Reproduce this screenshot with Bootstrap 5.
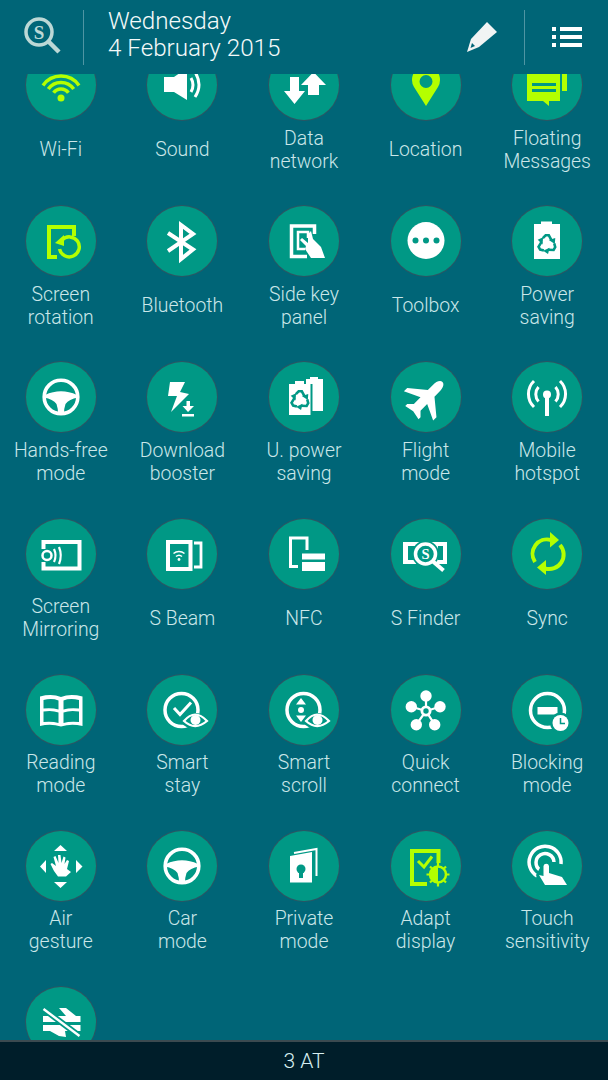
<!DOCTYPE html>
<html lang="en">
<head>
    <meta charset="UTF-8">
    <title>Quick settings</title>
    <meta name="viewport" content="width=device-width, initial-scale=1">
    <link href="https://cdn.jsdelivr.net/npm/bootstrap@5.3.3/dist/css/bootstrap.min.css" rel="stylesheet">
    <script src="https://cdn.jsdelivr.net/npm/bootstrap@5.3.3/dist/js/bootstrap.bundle.min.js"></script>
    <style>
        body {
            background-color: #006577;
            font-family: Roboto, "Liberation Sans", sans-serif;
            color: #cbe7e9;
            height: 1080px;
        }

        .top-bar {
            height: 74px;
            flex: none;
        }

        .top-sep {
            width: 1px;
            height: 55px;
            background: #4f95a3;
            flex: none;
        }

        .search-btn {
            width: 83px;
            padding-left: 23px;
        }

        .date-text {
            margin-left: 24px;
            margin-bottom: 5px;
            font-size: 24.2px;
            font-weight: 300;
            line-height: 27px;
            color: #f4fafa;
        }

        .edit-btn {
            margin-right: 26px;
        }

        .list-btn {
            margin-left: 27px;
            margin-right: 26px;
        }

        .tile-area {
            min-height: 0;
        }

        .tile-grid {
            margin-top: -24px;
        }

        .tile {
            height: 156.2px;
        }

        .tile-disc {
            width: 70px;
            height: 70px;
            background: #009885;
            box-shadow: 0 0 0 1px #2c5663;
        }

        .tile-label {
            height: 46px;
            margin-top: 6.5px;
            font-size: 19.4px;
            font-weight: 300;
            line-height: 23px;
        }

        .ico {
            display: block;
            fill: #fff;
            color: #fff;
        }

        .ico.lime {
            fill: #b4ff00;
            color: #b4ff00;
        }

        .ln {
            fill: none;
            stroke: currentColor;
        }

        .hole {
            fill: #009885;
        }

        .hole-ln {
            fill: none;
            stroke: #009885;
        }

        .sign {
            font-family: "Liberation Serif", serif;
            font-weight: 700;
        }

        .bottom-bar {
            height: 40px;
            flex: none;
            padding-top: 2px;
            background: #001e2a;
            border-top: 2px solid #3b4a50;
            font-size: 21px;
            font-weight: 300;
            color: #d6eef0;
        }
    </style>
</head>
<body class="d-flex flex-column overflow-hidden">

<!-- shared shapes -->
<svg class="d-none">
    <symbol id="wheel" viewBox="0 0 70 70">
        <circle class="ln" cx="35" cy="35" r="16.800" stroke-width="3.600"/>
        <path d="M19 33Q35 25.500 51 33L52 35.500Q43 37 39.500 42 38 46 38 52H32Q32 46 30.500 42 27 37 18 35.500Z"/>
    </symbol>
    <symbol id="recycle" viewBox="-12 -12 24 24">
        <g id="rec-arm">
            <path class="hole-ln" d="M-4.500-6.500-1.500-9.500H2L5-4" stroke-width="2.800"/>
            <path class="hole" d="M2-4.500 9-6.500 8.500 0Z"/>
        </g>
        <use href="#rec-arm" transform="rotate(120)"/>
        <use href="#rec-arm" transform="rotate(240)"/>
    </symbol>
</svg>

<header class="top-bar d-flex align-items-center">
    <div class="search-btn">
        <svg class="ico" width="40" height="40" viewBox="0 0 40 40">
            <circle cx="16" cy="15" r="13" fill="none" stroke="#bcd8d6" stroke-width="3.500"/>
            <text class="sign" x="16" y="21.500" font-size="19" text-anchor="middle" fill="#bcd8d6">S</text>
            <path d="M25.500 24.500 36 35" stroke="#bcd8d6" stroke-width="4.500" fill="none"/>
        </svg>
    </div>
    <div class="top-sep"></div>
    <div class="date-text flex-grow-1">Wednesday<br>4 February 2015</div>
    <svg class="ico edit-btn" width="32" height="32" viewBox="0 0 32 32">
        <path fill="#f1f4f4" d="M21 1 31 11 13 26 1 31 5 18Z"/>
        <path style="fill:#006577" d="M4.500 27 6 22 9 25Z"/>
    </svg>
    <div class="top-sep"></div>
    <svg class="ico list-btn" width="30" height="22" viewBox="0 0 30 22">
        <path d="M0 1H4V5H0ZM8 1H30V5H8ZM0 9H4V13H0ZM8 9H30V13H8ZM0 17H4V21H0ZM8 17H30V21H8Z"/>
    </svg>
</header>

<main class="tile-area flex-grow-1 overflow-hidden">
    <div class="row row-cols-5 g-0 tile-grid">

        <div class="col tile d-flex flex-column align-items-center">
            <div class="tile-disc rounded-circle">
                <svg class="ico lime" width="70" height="70" viewBox="0 0 70 70">
                    <g class="ln" stroke-width="3.500">
                        <path d="M27.600 42.800A9 9 0 0 1 42.400 42.800"/>
                        <path d="M22.300 39.100A15.500 15.500 0 0 1 47.700 39.100"/>
                        <path d="M17 35.400A22 22 0 0 1 53 35.400"/>
                    </g>
                    <circle cx="35" cy="48" r="3.500"/>
                </svg>
            </div>
            <div class="tile-label d-flex align-items-center text-center">Wi-Fi</div>
        </div>

        <div class="col tile d-flex flex-column align-items-center">
            <div class="tile-disc rounded-circle">
                <svg class="ico" width="70" height="70" viewBox="0 0 70 70">
                    <path d="M17 27H27L40 18V50L27 42H17Z"/>
                    <g class="ln" stroke-width="3">
                        <path d="M44 28Q48 35 44 42"/>
                        <path d="M48 22Q56 35 48 47"/>
                    </g>
                </svg>
            </div>
            <div class="tile-label d-flex align-items-center text-center">Sound</div>
        </div>

        <div class="col tile d-flex flex-column align-items-center">
            <div class="tile-disc rounded-circle">
                <svg class="ico" width="70" height="70" viewBox="0 0 70 70">
                    <path d="M21 27H30V41H36L25.500 54 15 41H21Z"/>
                    <path d="M44.500 22 57 35H50V45H39V35H32Z"/>
                </svg>
            </div>
            <div class="tile-label d-flex align-items-center text-center">Data<br>network</div>
        </div>

        <div class="col tile d-flex flex-column align-items-center">
            <div class="tile-disc rounded-circle">
                <svg class="ico lime" width="70" height="70" viewBox="0 0 70 70">
                    <path fill-rule="evenodd" d="M35 56 23 37A14 14 0 1 1 47 37ZM35 38A6.500 6.500 0 1 0 35 25 6.500 6.500 0 1 0 35 38Z"/>
                </svg>
            </div>
            <div class="tile-label d-flex align-items-center text-center">Location</div>
        </div>

        <div class="col tile d-flex flex-column align-items-center">
            <div class="tile-disc rounded-circle">
                <svg class="ico lime" width="70" height="70" viewBox="0 0 70 70">
                    <path d="M15 20H48V51H37V56L31 51H15Z"/>
                    <path d="M50 20H55V41H50Z"/>
                    <path class="hole" d="M20 33H44V36H20ZM20 39H44V42H20Z"/>
                </svg>
            </div>
            <div class="tile-label d-flex align-items-center text-center">Floating<br>Messages</div>
        </div>

        <div class="col tile d-flex flex-column align-items-center">
            <div class="tile-disc rounded-circle">
                <svg class="ico lime" width="70" height="70" viewBox="0 0 70 70">
                    <path d="M50 30V19H21V53H31V49H25V23H46V30Z"/>
                    <path class="ln" stroke-width="3.500" d="M36 34A10 10 0 1 1 33.500 43"/>
                    <path d="M29 37 38 29V40Z"/>
                </svg>
            </div>
            <div class="tile-label d-flex align-items-center text-center">Screen<br>rotation</div>
        </div>

        <div class="col tile d-flex flex-column align-items-center">
            <div class="tile-disc rounded-circle">
                <svg class="ico" width="70" height="70" viewBox="0 0 70 70">
                    <path class="ln" stroke-width="4" d="M21 27 46 43.500 34 53V19L46 28 21 45"/>
                </svg>
            </div>
            <div class="tile-label d-flex align-items-center text-center">Bluetooth</div>
        </div>

        <div class="col tile d-flex flex-column align-items-center">
            <div class="tile-disc rounded-circle">
                <svg class="ico" width="70" height="70" viewBox="0 0 70 70">
                    <path class="ln" stroke-width="3.500" d="M38 50.500H22.500V20H45.500V28"/>
                    <path class="ln" stroke-width="2.500" d="M36 43H29V26H39V32"/>
                    <path d="M31 34 33 32 39 37V28L42 25 44 33 52 41 56 52H42L36 43 37 40Z"/>
                </svg>
            </div>
            <div class="tile-label d-flex align-items-center text-center">Side key<br>panel</div>
        </div>

        <div class="col tile d-flex flex-column align-items-center">
            <div class="tile-disc rounded-circle">
                <svg class="ico" width="70" height="70" viewBox="0 0 70 70">
                    <circle cx="35" cy="34.500" r="18.500"/>
                    <g class="hole">
                        <circle cx="24.500" cy="34.500" r="3"/>
                        <circle cx="35" cy="34.500" r="3"/>
                        <circle cx="45.500" cy="34.500" r="3"/>
                    </g>
                </svg>
            </div>
            <div class="tile-label d-flex align-items-center text-center">Toolbox</div>
        </div>

        <div class="col tile d-flex flex-column align-items-center">
            <div class="tile-disc rounded-circle">
                <svg class="ico" width="70" height="70" viewBox="0 0 70 70">
                    <path d="M29 15.500H40V18H48V53H22V18H29Z"/>
                    <use href="#recycle" x="24" y="27" width="22" height="22"/>
                </svg>
            </div>
            <div class="tile-label d-flex align-items-center text-center">Power<br>saving</div>
        </div>

        <div class="col tile d-flex flex-column align-items-center">
            <div class="tile-disc rounded-circle">
                <svg class="ico" width="70" height="70"><use href="#wheel" width="70" height="70"/></svg>
            </div>
            <div class="tile-label d-flex align-items-center text-center">Hands-free<br>mode</div>
        </div>

        <div class="col tile d-flex flex-column align-items-center">
            <div class="tile-disc rounded-circle">
                <svg class="ico" width="70" height="70" viewBox="0 0 70 70">
                    <path d="M23 20H38L33 30 42 32 24 50 30 34 21 34Z"/>
                    <path d="M39.500 39H43V44H47L41 50 35.500 44H39.500ZM35 52H47V54.500H35Z"/>
                </svg>
            </div>
            <div class="tile-label d-flex align-items-center text-center">Download<br>booster</div>
        </div>

        <div class="col tile d-flex flex-column align-items-center">
            <div class="tile-disc rounded-circle">
                <svg class="ico" width="70" height="70" viewBox="0 0 70 70">
                    <path d="M37 17H41V15H49V17H54V49H43.500V22H37Z"/>
                    <path d="M26 19H35V22H41.500V53H20V22H26Z"/>
                    <use href="#recycle" x="20" y="27" width="22" height="22"/>
                </svg>
            </div>
            <div class="tile-label d-flex align-items-center text-center">U. power<br>saving</div>
        </div>

        <div class="col tile d-flex flex-column align-items-center">
            <div class="tile-disc rounded-circle">
                <svg class="ico" width="70" height="70" viewBox="0 0 70 70">
                    <path transform="translate(35.500 36) rotate(45) scale(.94)" d="M0-24C3.500-24 5-19 5-15V-7L22 7V12L5 4V14L10 19V22L0 20-10 22V19L-5 14V4L-22 12V7L-5-7V-15C-5-19-3.500-24 0-24Z"/>
                </svg>
            </div>
            <div class="tile-label d-flex align-items-center text-center">Flight<br>mode</div>
        </div>

        <div class="col tile d-flex flex-column align-items-center">
            <div class="tile-disc rounded-circle">
                <svg class="ico" width="70" height="70" viewBox="0 0 70 70">
                    <circle cx="35" cy="32.500" r="4"/>
                    <path d="M33 33H37V54H33Z"/>
                    <g class="ln" stroke-width="3">
                        <path d="M26.500 25A11 11 0 0 0 26.500 39.500"/>
                        <path d="M43.500 25A11 11 0 0 1 43.500 39.500"/>
                        <path d="M22 19A18 18 0 0 0 22 45"/>
                        <path d="M48 19A18 18 0 0 1 48 45"/>
                    </g>
                </svg>
            </div>
            <div class="tile-label d-flex align-items-center text-center">Mobile<br>hotspot</div>
        </div>

        <div class="col tile d-flex flex-column align-items-center">
            <div class="tile-disc rounded-circle">
                <svg class="ico" width="70" height="70" viewBox="0 0 70 70">
                    <g class="ln">
                        <path stroke-width="4" d="M17.500 30V23H53.500V49.500H17.500V43"/>
                        <circle stroke-width="2.500" cx="21" cy="36.500" r="4.500"/>
                        <path stroke-width="2.200" d="M28 30Q31 36.500 28 43"/>
                        <path stroke-width="2.200" d="M33 28Q36.500 36.500 33 45"/>
                    </g>
                </svg>
            </div>
            <div class="tile-label d-flex align-items-center text-center">Screen<br>Mirroring</div>
        </div>

        <div class="col tile d-flex flex-column align-items-center">
            <div class="tile-disc rounded-circle">
                <svg class="ico" width="70" height="70" viewBox="0 0 70 70">
                    <g class="ln">
                        <path stroke-width="4" d="M21 23H43.500V50H21Z"/>
                        <path stroke-width="2.800" d="M47 24H54V48H47"/>
                        <path stroke-width="1.500" d="M29 37.500A4.500 4.500 0 0 1 35 37.500"/>
                        <path stroke-width="1.500" d="M26.500 34.500A8.500 8.500 0 0 1 37.500 34.500"/>
                    </g>
                    <circle cx="32" cy="40.500" r="1.400"/>
                </svg>
            </div>
            <div class="tile-label d-flex align-items-center text-center">S Beam</div>
        </div>

        <div class="col tile d-flex flex-column align-items-center">
            <div class="tile-disc rounded-circle">
                <svg class="ico" width="70" height="70" viewBox="0 0 70 70">
                    <path class="ln" stroke-width="3" d="M38 31V19H21.500V47.500H29"/>
                    <path d="M33 34.500H56V40.500H33ZM33 43H56V52H33Z"/>
                </svg>
            </div>
            <div class="tile-label d-flex align-items-center text-center">NFC</div>
        </div>

        <div class="col tile d-flex flex-column align-items-center">
            <div class="tile-disc rounded-circle">
                <svg class="ico" width="70" height="70" viewBox="0 0 70 70">
                    <path d="M12 23H56V45H12ZM17 27V41H24V27ZM47 27V41H52V27Z" fill-rule="evenodd"/>
                    <circle class="hole" cx="34.500" cy="35" r="13.500"/>
                    <circle cx="34.500" cy="35" r="10" fill="none" stroke="#fff" stroke-width="3.500"/>
                    <text class="sign" x="34.500" y="40" font-size="14.500" text-anchor="middle">S</text>
                    <path class="ln" stroke-width="4" d="M41.500 42 52.500 51.500"/>
                </svg>
            </div>
            <div class="tile-label d-flex align-items-center text-center">S Finder</div>
        </div>

        <div class="col tile d-flex flex-column align-items-center">
            <div class="tile-disc rounded-circle">
                <svg class="ico lime" width="70" height="70" viewBox="0 0 70 70">
                    <g class="ln" stroke-width="4">
                        <path d="M39 21A14.500 14.500 0 0 0 23 43"/>
                        <path d="M33 49.500A14.500 14.500 0 0 0 48 26"/>
                    </g>
                    <path d="M38 13 47 21 38 28.500Z"/>
                    <path d="M34 41 25 48.500 34 56Z"/>
                </svg>
            </div>
            <div class="tile-label d-flex align-items-center text-center">Sync</div>
        </div>

        <div class="col tile d-flex flex-column align-items-center">
            <div class="tile-disc rounded-circle">
                <svg class="ico" width="70" height="70" viewBox="0 0 70 70">
                    <path d="M14 21.500Q26 18.500 35 22 44 18.500 56.500 21.500V51Q45 48.500 35 51.500 25 48.500 14 51Z"/>
                    <g class="hole">
                        <path d="M17.500 25Q26 23 32.500 25.500V34.500Q26 32.500 17.500 33.500Z"/>
                        <path d="M17.500 36.500Q26 35 32.500 37.500V48Q26 46 17.500 47Z"/>
                        <path d="M37.500 25.500Q44 23 53 25V33.500Q44 32.500 37.500 34.500Z"/>
                        <path d="M37.500 37.500Q44 35 53 36.500V47Q44 46 37.500 48Z"/>
                    </g>
                </svg>
            </div>
            <div class="tile-label d-flex align-items-center text-center">Reading<br>mode</div>
        </div>

        <div class="col tile d-flex flex-column align-items-center">
            <div class="tile-disc rounded-circle">
                <svg class="ico" width="70" height="70" viewBox="0 0 70 70">
                    <circle class="ln" stroke-width="3.500" cx="34.500" cy="35" r="16.500"/>
                    <path class="ln" stroke-width="3" d="M27 33 33 39.500 44 27.500"/>
                    <path class="hole" d="M33 47Q48 29 64 47 48 62 33 47Z"/>
                    <path class="ln" stroke-width="2.200" d="M37 46Q48 33 60 46 48 56 37 46Z"/>
                    <circle cx="48.500" cy="45" r="5"/>
                </svg>
            </div>
            <div class="tile-label d-flex align-items-center text-center">Smart<br>stay</div>
        </div>

        <div class="col tile d-flex flex-column align-items-center">
            <div class="tile-disc rounded-circle">
                <svg class="ico" width="70" height="70" viewBox="0 0 70 70">
                    <circle class="ln" stroke-width="3.500" cx="34.500" cy="35" r="16.500"/>
                    <path d="M32 23 37 29.500H27ZM32 47 37 40.500H27Z"/>
                    <circle cx="32" cy="35" r="3"/>
                    <path class="hole" d="M33 47Q48 29 64 47 48 62 33 47Z"/>
                    <path class="ln" stroke-width="2.200" d="M37 46Q48 33 60 46 48 56 37 46Z"/>
                    <circle cx="48.500" cy="45" r="5"/>
                </svg>
            </div>
            <div class="tile-label d-flex align-items-center text-center">Smart<br>scroll</div>
        </div>

        <div class="col tile d-flex flex-column align-items-center">
            <div class="tile-disc rounded-circle">
                <svg class="ico" width="70" height="70" viewBox="0 0 70 70">
                    <g class="ln" stroke-width="2.200">
                        <path d="M35 36 35 21M35 36 20.300 31.700M35 36 49 31.700M35 36 25.300 49.700M35 36 43.700 49.700"/>
                    </g>
                    <circle cx="35" cy="21" r="5.700"/>
                    <circle cx="20.300" cy="31.700" r="5.700"/>
                    <circle cx="49" cy="31.700" r="5.700"/>
                    <circle cx="25.300" cy="49.700" r="5.700"/>
                    <circle cx="43.700" cy="49.700" r="5.700"/>
                    <circle cx="35" cy="36" r="5.500"/>
                    <circle class="hole" cx="35" cy="36" r="2.700"/>
                </svg>
            </div>
            <div class="tile-label d-flex align-items-center text-center">Quick<br>connect</div>
        </div>

        <div class="col tile d-flex flex-column align-items-center">
            <div class="tile-disc rounded-circle">
                <svg class="ico" width="70" height="70" viewBox="0 0 70 70">
                    <circle class="ln" stroke-width="3.500" cx="35.500" cy="35.500" r="17"/>
                    <path d="M25.500 32H45.500V39.500H25.500Z"/>
                    <circle class="hole" cx="48.500" cy="48" r="10.500"/>
                    <circle cx="48.500" cy="48" r="8"/>
                    <path class="hole-ln" stroke-width="1.500" d="M48.500 43V48.500H53"/>
                </svg>
            </div>
            <div class="tile-label d-flex align-items-center text-center">Blocking<br>mode</div>
        </div>

        <div class="col tile d-flex flex-column align-items-center">
            <div class="tile-disc rounded-circle">
                <svg class="ico" width="70" height="70" viewBox="0 0 70 70">
                    <path d="M34.500 14 41 20H28ZM34.500 57 41 51H28ZM14 35.500 20 29V42ZM56.500 35.500 50 29V42Z"/>
                    <path d="M28 40 24.500 33 26 32 30 35 27.500 26 29.500 25 32.500 32 32 24 34.500 24 35.500 32 37.500 25.500 39.500 26.500 38.500 33 41 29 43 30 41 38 45 41 40 45.500H32Z"/>
                </svg>
            </div>
            <div class="tile-label d-flex align-items-center text-center">Air<br>gesture</div>
        </div>

        <div class="col tile d-flex flex-column align-items-center">
            <div class="tile-disc rounded-circle">
                <svg class="ico" width="70" height="70"><use href="#wheel" width="70" height="70"/></svg>
            </div>
            <div class="tile-label d-flex align-items-center text-center">Car<br>mode</div>
        </div>

        <div class="col tile d-flex flex-column align-items-center">
            <div class="tile-disc rounded-circle">
                <svg class="ico" width="70" height="70" viewBox="0 0 70 70">
                    <path d="M21 25 43 21V51.500H21Z"/>
                    <path class="ln" stroke-width="2" d="M25 22 47.500 18V45"/>
                    <circle class="hole" cx="32" cy="38" r="4.500"/>
                    <path class="hole" d="M30 38H34V47H30Z"/>
                </svg>
            </div>
            <div class="tile-label d-flex align-items-center text-center">Private<br>mode</div>
        </div>

        <div class="col tile d-flex flex-column align-items-center">
            <div class="tile-disc rounded-circle">
                <svg class="ico lime" width="70" height="70" viewBox="0 0 70 70">
                    <path d="M19 18H49.500V32H45.500V22H23V51H36V55H19Z"/>
                    <path class="ln" stroke-width="3" d="M27 30 33 36 41 25.500"/>
                    <circle class="ln" stroke-width="2.500" cx="47" cy="43.500" r="8"/>
                    <path d="M47 35.500A8 8 0 0 0 47 51.500Z"/>
                    <path class="ln" stroke-width="2.200" d="M47 32V35M47 52V55.500M35.500 43.500H38.500M55.500 43.500H58.500M39 35.500 41 37.500M53 49.500 55 51.500M39 51.500 41 49.500M53 37.500 55 35.500"/>
                </svg>
            </div>
            <div class="tile-label d-flex align-items-center text-center">Adapt<br>display</div>
        </div>

        <div class="col tile d-flex flex-column align-items-center">
            <div class="tile-disc rounded-circle">
                <svg class="ico" width="70" height="70" viewBox="0 0 70 70">
                    <path class="ln" stroke-width="3.500" d="M25 45A16 16 0 1 1 49 33"/>
                    <path class="ln" stroke-width="3.500" d="M28 39A9 9 0 1 1 42 31"/>
                    <path class="hole" d="M29 35A5 5 0 0 1 39 34V40L53 44 58 56H29L24 44Z"/>
                    <path d="M31.500 35A2.800 2.800 0 0 1 37 35V42L50 46 55 54H33L27 44 31.500 45Z"/>
                </svg>
            </div>
            <div class="tile-label d-flex align-items-center text-center">Touch<br>sensitivity</div>
        </div>

        <div class="col tile d-flex flex-column align-items-center">
            <div class="tile-disc rounded-circle">
                <svg class="ico" width="70" height="70" viewBox="0 0 70 70">
                    <path d="M33 21 40 21 50 29 54.500 29V35H17V29H26L40 29Z"/>
                    <path d="M17 38H54.500V44H46L39 44 40 50 33 49 24 44H17Z"/>
                    <path class="hole-ln" stroke-width="6" d="M15 20 56 51"/>
                    <path class="ln" stroke-width="2.400" d="M17.500 22 53.500 49"/>
                </svg>
            </div>
        </div>

    </div>
</main>

<footer class="bottom-bar d-flex align-items-center justify-content-center">3 AT</footer>

</body>
</html>
